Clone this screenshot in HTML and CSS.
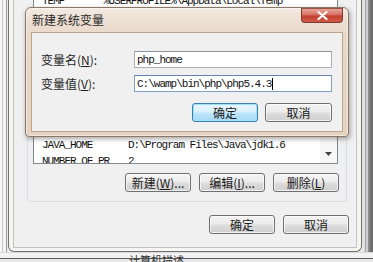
FILE: index.html
```html
<!DOCTYPE html>
<html lang="zh-CN">
<head>
<meta charset="utf-8">
<title>新建系统变量</title>
<link rel="stylesheet" href="styles.css">
</head>
<body>
<div class="screen">
  <div class="left-strip"></div>
  <div class="bg-win">
    <div class="bg-client">
      <div class="user-list">
        <div class="lrow top-row"><span class="c1u">TEMP</span><span>%USERPROFILE%\AppData\Local\Temp</span></div>
      </div>
      <div class="group">
        <div class="sys-list">
          <div class="rows">
            <div class="lrow"><span class="c1">ComSpec</span><span>C:\Windows\system32\cmd.exe</span></div>
            <div class="lrow"><span class="c1">FP_NO_HOST_C</span><span>NO</span></div>
            <div class="lrow"><span class="c1">HOME</span><span>D:\</span></div>
            <div class="lrow"><span class="c1">JAVA_HOME</span><span>D:\Program Files\Java\jdk1.6</span></div>
            <div class="lrow"><span class="c1">NUMBER_OF_PR</span><span>2</span></div>
          </div>
          <div class="vscroll">
            <div class="sb-down">
              <svg width="7" height="4" viewBox="0 0 7 4"><path d="M0 0H7L3.5 4Z" fill="#444"/></svg>
            </div>
          </div>
        </div>
        <div class="btn-row group-btns">
          <button class="btn">新建(<u>W</u>)...</button>
          <button class="btn">编辑(<u>I</u>)...</button>
          <button class="btn">删除(<u>L</u>)</button>
        </div>
      </div>
      <div class="btn-row main-btns">
        <button class="btn">确定</button>
        <button class="btn">取消</button>
      </div>
    </div>
  </div>
  <div class="right-strip"></div>
  <div class="bottom-strip"><span class="behind-text">、计算机描述</span></div>

  <div class="dialog">
    <div class="titlebar">
      <span class="title">新建系统变量</span>
      <div class="close">
        <svg width="11" height="9" viewBox="0 0 11 9"><path d="M1.5 1L9.5 8M9.5 1L1.5 8" stroke="#fff" stroke-width="2.2" stroke-linecap="round"/></svg>
      </div>
    </div>
    <div class="dlg-client">
      <div class="form">
        <label class="lbl">变量名(<u>N</u>):</label>
        <div class="field"><span class="mono">php_home</span></div>
        <label class="lbl">变量值(<u>V</u>):</label>
        <div class="field focus"><span class="mono">C:\wamp\bin\php\php5.4.3</span><span class="caret"></span></div>
      </div>
      <div class="btn-row dlg-btns">
        <button class="btn default">确定</button>
        <button class="btn">取消</button>
      </div>
    </div>
  </div>
</div>
</body>
</html>
```
FILE: styles.css
```css
* { box-sizing: border-box; }
html, body { margin: 0; padding: 0; }
body {
  width: 373px;
  height: 262px;
  overflow: hidden;
  background: #f2f2f2;
  font-family: "Noto Sans CJK SC", "Liberation Sans", sans-serif;
  font-size: 12px;
  color: #1e1e1e;
}
.screen {
  position: relative;
  width: 373px;
  height: 262px;
  overflow: hidden;
  display: grid;
  grid-template-columns: 8px 354px 11px;
  grid-template-rows: 252px 10px;
}
.left-strip {
  background: linear-gradient(to right, #f7f7f7 0 2px, #c9c9c9 2px 3px, #f4f4f4 3px 6px, #9c9c9c 6px 7px, #e9e9e9 7px);
}
.right-strip {
  background: linear-gradient(to right, #e2e2e2 0 3px, #a3a3a3 3px 4px, #cfcfcf 4px 6px, #8a8a8a 6px 8px, #6e6e6e 8px);
}
.bottom-strip {
  grid-column: 1 / 4;
  background: linear-gradient(#d9d9d9 0 1px, #f3f3f3 1px 6px, #5a5a5a 6px 7px, #e8e8e8 7px);
  overflow: hidden;
  padding-left: 118px;
}
.behind-text {
  display: block;
  line-height: 12px;
  margin-top: 2px;
  font-size: 11px;
  color: #333;
}

/* background window (环境变量) */
.bg-win {
  background: #f7f5f2;
  border: 1px solid #707070;
  border-top: none;
  border-radius: 0 0 6px 6px;
  padding: 0 4px 3px 4px;
}
.bg-client {
  height: 248px;
  background: #f0f0f0;
  border: 1px solid #c2c2c2;
  border-top: none;
  display: flex;
  flex-direction: column;
  align-items: flex-start;
}
.user-list {
  margin-left: 19px;
  width: 305px;
  height: 60px;
  background: #fff;
  border: 1px solid #828790;
  border-top: none;
  overflow: hidden;
  padding-left: 8px;
}
.lrow {
  height: 16px;
  line-height: 16px;
  white-space: nowrap;
  font-family: "Liberation Mono", monospace;
  font-size: 11px;
  letter-spacing: -1px;
  color: #111;
  display: flex;
}
.top-row { margin-top: -7px; }
.c1u { width: 61px; }
.c1 { width: 86px; }

.group {
  margin-top: 10px;
  margin-left: 13px;
  width: 320px;
  border: 1px solid #d5dfe5;
  border-radius: 3px;
  padding: 0 0 9px 5px;
}
.sys-list {
  margin-top: 17px;
  width: 305px;
  height: 76px;
  background: #fff;
  border: 1px solid #828790;
  display: flex;
  overflow: hidden;
}
.rows {
  flex: 1;
  padding-left: 8px;
  overflow: hidden;
}
.vscroll {
  width: 17px;
  background: #f7f7f7;
  display: flex;
  flex-direction: column;
  justify-content: flex-end;
}
.sb-down {
  height: 17px;
  display: flex;
  align-items: center;
  justify-content: center;
  padding-bottom: 2px;
}

.btn-row {
  display: flex;
  justify-content: flex-end;
  align-self: stretch;
}
.group-btns {
  margin-top: 9px;
  gap: 8px;
  padding-right: 7px;
}
.main-btns {
  margin-top: 13px;
  gap: 8px;
  padding-right: 7px;
}
.btn {
  width: 66px;
  height: 19px;
  padding: 0;
  margin: 0;
  border: 1px solid #707070;
  border-radius: 3px;
  background: linear-gradient(#f4f4f4 0%, #ebebeb 48%, #dddddd 52%, #cfcfcf 100%);
  font-family: "Noto Sans CJK SC", sans-serif;
  font-size: 12px;
  line-height: 16px;
  color: #1a1a1a;
  box-shadow: inset 0 0 0 1px rgba(255,255,255,0.7);
}
.btn u { text-decoration: underline; }

/* foreground dialog (新建系统变量) — floats over the window behind */
.dialog {
  position: absolute;
  left: 25px;
  top: 7px;
  width: 324px;
  height: 130px;
  border: 1px solid #8a7765;
  border-radius: 6px 6px 4px 4px;
  background: linear-gradient(#f4ebe3 0px, #eddfd3 12px, #e9d8c8 30px, #e6d2bf 100%);
  padding: 0 5px 4px 5px;
  display: flex;
  flex-direction: column;
  box-shadow: 1px 2px 5px rgba(0,0,0,0.35), inset 0 0 0 1px rgba(255,255,255,0.45);
}
.titlebar {
  height: 24px;
  display: flex;
  align-items: flex-start;
}
.title {
  margin-left: 1px;
  line-height: 24px;
  font-size: 12px;
  color: #2a2a2a;
}
.close {
  margin-left: auto;
  width: 42px;
  height: 15px;
  border: 1px solid #7d3b30;
  border-top-color: #9a5549;
  border-radius: 0 0 4px 4px;
  background: linear-gradient(#e6a497 0%, #d9776a 40%, #c4412f 55%, #cf5a48 100%);
  display: flex;
  align-items: center;
  justify-content: center;
}
.dlg-client {
  flex: 1;
  background: #f0f0f0;
  border: 1px solid #bba58c;
  display: flex;
  flex-direction: column;
}
.form {
  padding: 18px 0 0 9px;
  display: grid;
  grid-template-columns: 93px 198px;
  grid-auto-rows: 17px;
  row-gap: 7px;
}
.lbl {
  line-height: 17px;
  font-size: 12px;
  color: #1e1e1e;
}
.field {
  background: #fff;
  border: 1px solid #abadb3;
  border-top-color: #8e949d;
  padding-left: 2px;
  display: flex;
  align-items: center;
}
.field.focus {
  border-color: #7ea0c4;
  border-top-color: #5f86b2;
}
.mono {
  font-family: "Liberation Mono", monospace;
  font-size: 11px;
  letter-spacing: -1px;
  color: #111;
  white-space: nowrap;
}
.caret {
  width: 1px;
  height: 12px;
  background: #000;
  margin-left: 1px;
}
.dlg-btns {
  margin-top: 11px;
  gap: 7px;
  padding-right: 10px;
}
.dlg-btns .btn:last-child { width: 67px; }
.btn.default {
  border-color: #3c7fb1;
  background: linear-gradient(#eaf6fd 0%, #d9f0fc 48%, #bee6fd 52%, #a7d9f5 100%);
  box-shadow: inset 0 0 0 1px #9fe0fa;
}
```
